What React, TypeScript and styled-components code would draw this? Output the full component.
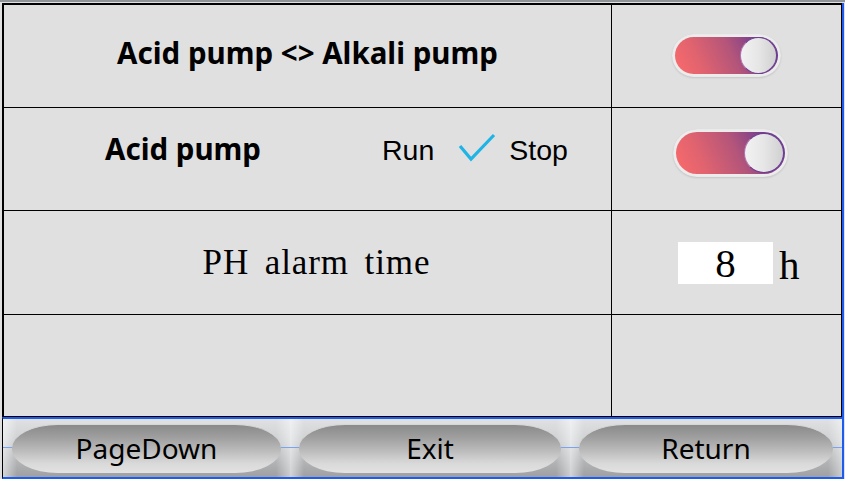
import React from "react";
import styled, { createGlobalStyle } from "styled-components";

const Global = createGlobalStyle`
  html, body { margin: 0; padding: 0; background: #e0e0e0; }
  * { box-sizing: border-box; }
`;

const Screen = styled.div`
  width: 845px;
  height: 479px;
  background: #e0e0e0;
  border-top: 2px solid #8f9296;
  padding: 1px 0 0 2px;
  display: flex;
  flex-direction: column;
  overflow: hidden;
`;

const Panel = styled.div`
  width: 840px;
  border-top: 2px solid #000;
  border-left: 2px solid #000;
  border-right: 1px solid #000;
  border-bottom: 1px solid #000;
  box-shadow: 2px 0 0 #1d5cf0;
  display: grid;
  grid-template-columns: 607px 1fr;
  grid-template-rows: 103px 103px 104px 101px;
`;

const Cell = styled.div<{ $right?: boolean; $last?: boolean }>`
  display: flex;
  align-items: center;
  border-left: ${(p) => (p.$right ? "1px solid #000" : "none")};
  border-bottom: ${(p) => (p.$last ? "none" : "1px solid #000")};
`;

const CenterCell = styled(Cell)<{ $shift?: number; $lift?: number }>`
  justify-content: center;
  padding-left: ${(p) => p.$shift ?? 0}px;
  padding-bottom: ${(p) => p.$lift ?? 0}px;
`;

const BoldLabel = styled.span`
  font-family: "Noto Sans", "Open Sans", sans-serif;
  font-weight: 700;
  font-size: 29.5px;
  color: #000;
  white-space: nowrap;
`;

const PumpRow = styled(Cell)`
  padding-left: 101px;
  padding-bottom: 22px;
`;

const RunStop = styled.div`
  display: flex;
  align-items: center;
  margin-left: 121px;
  padding-top: 4px;
`;

const PlainWord = styled.span`
  font-family: "Liberation Sans", Arial, sans-serif;
  font-size: 28.5px;
  color: #000;
`;

const CheckBox = styled.svg`
  width: 38px;
  height: 30px;
  margin: 0 13px 0 24px;
  position: relative;
  top: -2px;
`;

const SerifLabel = styled.span`
  font-family: "Liberation Serif", "Times New Roman", serif;
  font-size: 35px;
  letter-spacing: 0.9px;
  word-spacing: 6px;
  color: #000;
  white-space: nowrap;
`;

const ToggleRing = styled.div<{ $w: number; $h: number }>`
  width: ${(p) => p.$w}px;
  height: ${(p) => p.$h}px;
  padding: 3px;
  border-radius: 999px;
  background: #ececec;
  box-shadow: 0 1px 2px rgba(0, 0, 0, 0.12), inset 0 0 1px rgba(0, 0, 0, 0.1);
  display: flex;
`;

const ToggleTrack = styled.div`
  flex: 1;
  border-radius: 999px;
  background: linear-gradient(65deg, #fb6b6b 0%, #e0636f 25%, #b4557a 55%, #7a3f8b 80%, #6a3a8e 100%);
  display: flex;
  justify-content: flex-end;
  align-items: center;
  padding-right: 1px;
`;

const Knob = styled.div<{ $d: number }>`
  width: ${(p) => p.$d}px;
  height: ${(p) => p.$d}px;
  border-radius: 50%;
  background: linear-gradient(to right, #f2f2f2 0%, #e6e6e6 50%, #d0d0d0 100%);
  border: 1.5px solid #6d3f94;
  border-left-color: #b27ab0;
`;

const Toggle = ({ w, h, d }: { w: number; h: number; d: number }) => (
  <ToggleRing $w={w} $h={h}>
    <ToggleTrack>
      <Knob $d={d} />
    </ToggleTrack>
  </ToggleRing>
);

const ToggleCell = styled(Cell)<{ $pad: number; $lift?: number }>`
  padding-left: ${(p) => p.$pad}px;
  padding-bottom: ${(p) => p.$lift ?? 0}px;
`;

const ValueCell = styled(Cell)`
  padding-left: 66px;
  gap: 6px;
`;

const ValueBox = styled.div`
  width: 95px;
  height: 42px;
  background: #fff;
  display: flex;
  align-items: center;
  justify-content: center;
  font-family: "Liberation Serif", "Times New Roman", serif;
  font-size: 41px;
  color: #000;
  line-height: 1;
  padding-top: 2px;
`;

const Unit = styled.span`
  font-family: "Liberation Serif", "Times New Roman", serif;
  font-size: 41px;
  color: #000;
  line-height: 1;
  padding-top: 6px;
`;

const BottomBar = styled.div`
  width: 842px;
  height: 62px;
  border-top: 2px solid #1d5cf0;
  border-bottom: 2px solid #1d5cf0;
  border-left: 1px solid #000;
  display: grid;
  grid-template-columns: 287px 280px 1fr;
  border-right: 2px solid #1d5cf0;
`;

const BarCell = styled.div`
  display: flex;
  padding: 5px 9px 4px 9px;
  background:
    linear-gradient(
      to bottom,
      transparent calc(50% - 1px),
      #7ba3ee calc(50% - 1px),
      #7ba3ee 50%,
      transparent 50%
    ),
    linear-gradient(to right, rgba(255, 255, 255, 0.55) 0, rgba(255, 255, 255, 0) 14px),
    linear-gradient(to left, rgba(255, 255, 255, 0.45) 0, rgba(255, 255, 255, 0) 14px),
    linear-gradient(
      to bottom,
      #dfe1e3 0%,
      #cfd1d3 35%,
      #bcbec0 60%,
      #9ea0a2 100%
    );
`;

const Pill = styled.button`
  flex: 1;
  border: none;
  border-top: 1px solid #d6d6d6;
  border-radius: 46px / 24px;
  background: linear-gradient(
    to bottom,
    #8a8a8a 0%,
    #9e9e9e 25%,
    #bdbdbd 55%,
    #d9d9d9 80%,
    #e2e2e2 100%
  );
  font-family: "Noto Sans", "Open Sans", sans-serif;
  font-size: 28px;
  color: #000;
  padding: 0 0 2px 0;
  cursor: pointer;
`;

export default function App() {
  return (
    <>
      <Global />
      <Screen>
        <Panel>
          <CenterCell $lift={8}>
            <BoldLabel>Acid pump &lt;&gt; Alkali pump</BoldLabel>
          </CenterCell>
          <ToggleCell $right $pad={60} $lift={2}>
            <Toggle w={109} h={43} d={37} />
          </ToggleCell>

          <PumpRow>
            <BoldLabel>Acid pump</BoldLabel>
            <RunStop>
              <PlainWord>Run</PlainWord>
              <CheckBox viewBox="0 0 38 30">
                <polyline
                  points="2,13 13,26 36,2"
                  fill="none"
                  stroke="#1fb4e6"
                  strokeWidth="3.2"
                  strokeLinejoin="miter"
                />
              </CheckBox>
              <PlainWord>Stop</PlainWord>
            </RunStop>
          </PumpRow>
          <ToggleCell $right $pad={61} $lift={13}>
            <Toggle w={115} h={48} d={40} />
          </ToggleCell>

          <CenterCell $shift={18}>
            <SerifLabel>PH alarm time</SerifLabel>
          </CenterCell>
          <ValueCell $right>
            <ValueBox>8</ValueBox>
            <Unit>h</Unit>
          </ValueCell>

          <Cell $last />
          <Cell $right $last />
        </Panel>
        <BottomBar>
          <BarCell>
            <Pill>PageDown</Pill>
          </BarCell>
          <BarCell>
            <Pill>Exit</Pill>
          </BarCell>
          <BarCell>
            <Pill>Return</Pill>
          </BarCell>
        </BottomBar>
      </Screen>
    </>
  );
}
